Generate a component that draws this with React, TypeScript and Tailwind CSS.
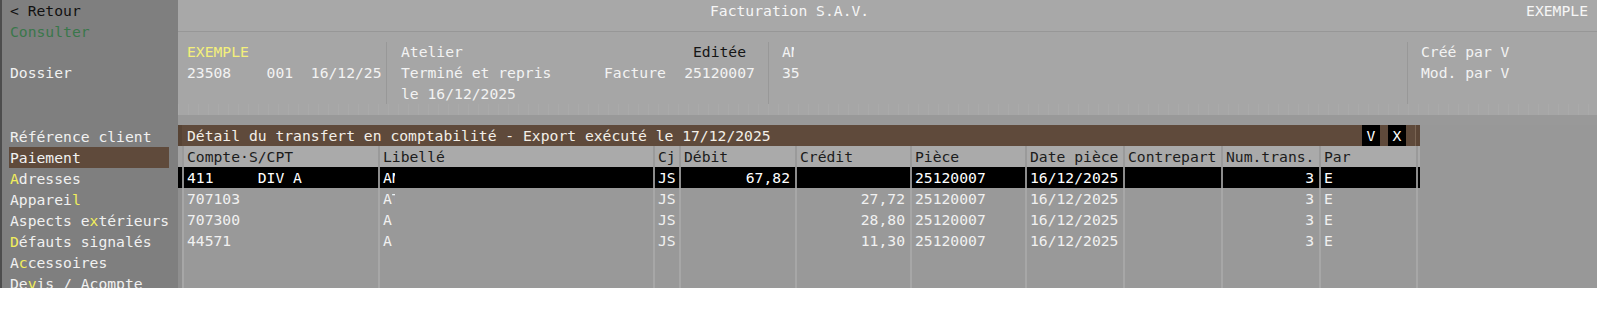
import React from "react";

const FONT = "font-['DejaVu_Sans_Mono','Liberation_Mono',monospace] text-[14.7px] leading-[21px]";

function Hl({ text, idx }: { text: string; idx?: number }) {
  if (idx === undefined) return <>{text}</>;
  return (
    <>
      {text.slice(0, idx)}
      <span className="text-[#f2ee5c]">{text[idx]}</span>
      {text.slice(idx + 1)}
    </>
  );
}

function Clip({ ch }: { ch: string }) {
  return <span className="inline-block w-[3px] overflow-hidden align-top whitespace-pre">{ch}</span>;
}

const menu: { t: string; i?: number; active?: boolean }[] = [
  { t: "Référence client" },
  { t: "Paiement", active: true },
  { t: "Adresses", i: 0 },
  { t: "Appareil", i: 7 },
  { t: "Aspects extérieurs", i: 9 },
  { t: "Défauts signalés", i: 0 },
  { t: "Accessoires", i: 1 },
  { t: "Devis / Acompte", i: 2 },
];

type Row = {
  compte: string;
  lib: React.ReactNode;
  cj: string;
  debit: string;
  credit: string;
  piece: string;
  date: string;
  contre: string;
  num: string;
  par: string;
};

const rows: Row[] = [
  { compte: "411     DIV A", lib: <>A<Clip ch="N" /></>, cj: "JS", debit: "67,82", credit: "", piece: "25120007", date: "16/12/2025", contre: "", num: "3", par: "E" },
  { compte: "707103", lib: <>A<Clip ch="T" /></>, cj: "JS", debit: "", credit: "27,72", piece: "25120007", date: "16/12/2025", contre: "", num: "3", par: "E" },
  { compte: "707300", lib: "A", cj: "JS", debit: "", credit: "28,80", piece: "25120007", date: "16/12/2025", contre: "", num: "3", par: "E" },
  { compte: "44571", lib: "A", cj: "JS", debit: "", credit: "11,30", piece: "25120007", date: "16/12/2025", contre: "", num: "3", par: "E" },
];

const GRID = "grid grid-cols-[4px_196px_275px_26px_116px_115px_115px_98px_98px_98px_97px_4px]";

function DataRow({ r, sel }: { r: Row; sel?: boolean }) {
  const cell = sel
    ? "bg-black border-l-2 border-[#8c8c8c] text-white whitespace-pre overflow-hidden"
    : "bg-[#999999] border-l-2 border-[#a7a7a7] text-[#f1f1f1] whitespace-pre overflow-hidden";
  const l = cell + " pl-[3px]";
  const rr = cell + " pr-[5px] text-right";
  return (
    <div className={GRID + " h-[21px]"}>
      <div className={sel ? "bg-black" : "bg-[#8f8f8f]"} />
      <div className={l}>{r.compte}</div>
      <div className={l}>{r.lib}</div>
      <div className={l}>{r.cj}</div>
      <div className={rr}>{r.debit}</div>
      <div className={rr}>{r.credit}</div>
      <div className={l}>{r.piece}</div>
      <div className={l}>{r.date}</div>
      <div className={l}>{r.contre}</div>
      <div className={rr}>{r.num}</div>
      <div className={l}>{r.par}</div>
      <div className={cell} />
    </div>
  );
}

export default function App() {
  const headers = ["Compte·S/CPT", "Libellé", "Cj", "Débit", "Crédit", "Pièce", "Date pièce", "Contrepart", "Num.trans.", "Par"];
  return (
    <div className={FONT + " w-[1597px] h-[288px] overflow-hidden flex bg-white"}>
      {/* Sidebar */}
      <div className="w-[178px] shrink-0 h-full bg-[#7f7f7f] border-l-2 border-[#4d4d4d] flex flex-col text-[#f1f1f1]">
        <div className="pl-[8px] h-[21px] text-[#111111] whitespace-pre">{"< Retour"}</div>
        <div className="pl-[8px] h-[21px] text-[#3a774b]">Consulter</div>
        <div className="pl-[8px] h-[21px] mt-[20px]">Dossier</div>
        <div className="flex flex-col mt-[43px]">
          {menu.map((m) => (
            <div key={m.t} className="h-[21px] pl-[7px] whitespace-pre">
              <div className={m.active ? "w-[160px] bg-[#5f4a3b] pl-[1px]" : "pl-[1px]"}>
                <Hl text={m.t} idx={m.i} />
              </div>
            </div>
          ))}
        </div>
      </div>

      {/* Main */}
      <div className="flex-1 flex flex-col h-full">
        {/* Top bar */}
        <div className="h-[31px] bg-[#a8a8a8] flex text-[#f6f6f6] whitespace-pre">
          <div className="pl-[532px]">Facturation S.A.V.</div>
          <div className="ml-auto pr-[9px]">EXEMPLE</div>
        </div>
        <div className="h-[1px] bg-[#979797]" />
        {/* Info panel */}
        <div className="h-[83px] bg-[#a6a6a6] flex flex-col">
          <div className="h-[72px] pt-[9px] flex text-[#f3f3f3] whitespace-pre">
            <div className="w-[208px] pl-[9px] flex flex-col">
              <div className="text-[#f4f07a]">EXEMPLE</div>
              <div>{"23508    001  16/12/25"}</div>
            </div>
            <div className="w-[1px] h-[62px] mt-[1px] bg-[#989898]" />
            <div className="w-[381px] pl-[14px] flex">
              <div className="w-[203px] flex flex-col">
                <div>Atelier</div>
                <div>Terminé et repris</div>
                <div>le 16/12/2025</div>
              </div>
              <div className="w-[80px] flex flex-col">
                <div className="h-[21px]" />
                <div>Facture</div>
              </div>
              <div className="w-[71px] flex flex-col items-center">
                <div className="text-[#151515]">Editée</div>
                <div>25120007</div>
              </div>
            </div>
            <div className="w-[1px] h-[62px] mt-[1px] bg-[#989898]" />
            <div className="w-[638px] pl-[13px] flex flex-col">
              <div>A<Clip ch="N" /></div>
              <div>35</div>
            </div>
            <div className="w-[1px] h-[62px] mt-[1px] bg-[#989898]" />
            <div className="pl-[13px] flex flex-col">
              <div>Créé par V</div>
              <div>Mod. par V</div>
            </div>
          </div>
          <div className="h-[11px] bg-[repeating-linear-gradient(90deg,#aaaaaa_0px,#aaaaaa_1px,#a6a6a6_1px,#a6a6a6_10px)]" />
        </div>
        {/* band */}
        <div className="h-[10px] bg-[#999999]" />
        {/* Table area */}
        <div className="flex-1 flex bg-[#989898]">
          <div className="w-[1242px] flex flex-col">
            {/* title */}
            <div className="h-[21px] bg-[#5f4a3b] flex text-[#f3efe8] whitespace-pre">
              <div className="w-[4px] bg-[#574334]" />
              <div className="pl-[5px] flex-1">Détail du transfert en comptabilité - Export exécuté le 17/12/2025</div>
              <div className="w-[18px] bg-black text-white text-center">V</div>
              <div className="w-[8px]" />
              <div className="w-[18px] bg-black text-white text-center">X</div>
              <div className="w-[9px]" />
              <div className="w-[1px] bg-[#7a6554]" />
              <div className="w-[4px] bg-[#5a4536]" />
            </div>
            {/* header */}
            <div className={GRID + " h-[21px] bg-[#aaaaaa] text-[#1c1c1c] whitespace-pre"}>
              <div className="bg-[#a2a2a2]" />
              {headers.map((h) => (
                <div key={h} className="border-l-2 border-[#9a9a9a] pl-[3px] overflow-hidden">
                  {h}
                </div>
              ))}
              <div className="border-l-2 border-[#9a9a9a]" />
            </div>
            <DataRow r={rows[0]} sel />
            {rows.slice(1).map((r) => (
              <DataRow key={r.compte} r={r} />
            ))}
            <div className={GRID + " flex-1"}>
              <div className="bg-[#8f8f8f]" />
              {Array.from({ length: 11 }).map((_, i) => (
                <div key={i} className="bg-[#999999] border-l-2 border-[#a7a7a7]" />
              ))}
            </div>
          </div>
          <div className="flex-1" />
        </div>
      </div>
    </div>
  );
}
